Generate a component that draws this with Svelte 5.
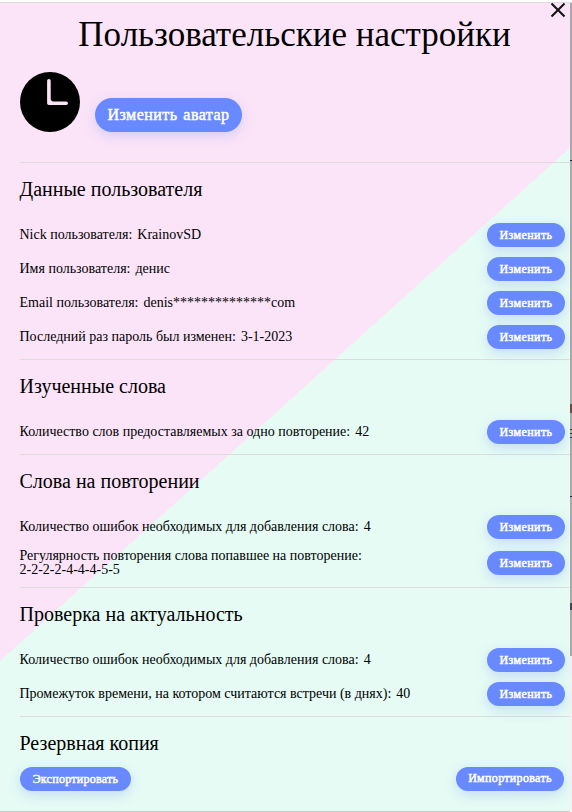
<script>
  const sections = [
    {
      title: 'Данные пользователя',
      rows: [
        { label: 'Nick пользователя:', value: 'KrainovSD' },
        { label: 'Имя пользователя:', value: 'денис' },
        { label: 'Email пользователя:', value: 'denis**************com' },
        { label: 'Последний раз пароль был изменен:', value: '3-1-2023' },
      ],
    },
    {
      title: 'Изученные слова',
      rows: [{ label: 'Количество слов предоставляемых за одно повторение:', value: '42' }],
    },
    {
      title: 'Слова на повторении',
      rows: [
        { label: 'Количество ошибок необходимых для добавления слова:', value: '4' },
        { label: 'Регулярность повторения слова попавшее на повторение:', value: '2-2-2-2-4-4-4-5-5', wrap: true },
      ],
    },
    {
      title: 'Проверка на актуальность',
      rows: [
        { label: 'Количество ошибок необходимых для добавления слова:', value: '4' },
        { label: 'Промежуток времени, на котором считаются встречи (в днях):', value: '40' },
      ],
    },
  ];
</script>

<div class="page">
  <main class="panel">
    <button class="close" aria-label="Закрыть">
      <svg width="16" height="16" viewBox="0 0 16 16"><path d="M1.5 1.5 14.5 14.5M14.5 1.5 1.5 14.5" /></svg>
    </button>
    <h1>Пользовательские настройки</h1>
    <div class="profile">
      <svg class="avatar" width="60" height="60" viewBox="0 0 60 60">
        <circle cx="30" cy="30" r="30" />
        <path d="M28.9 8.7V31.2H46.2" />
        <path class="joint" d="M30 28.5 31.8 30.5" />
      </svg>
      <button class="btn large">Изменить аватар</button>
    </div>
    {#each sections as section}
      <section>
        <h2>{section.title}</h2>
        <div class="rows">
          {#each section.rows as row}
            <div class="row">
              <p class:wrap={row.wrap}><span>{row.label}</span><span>{row.value}</span></p>
              <button class="btn">Изменить</button>
            </div>
          {/each}
        </div>
      </section>
    {/each}
    <section class="backup">
      <h2>Резервная копия</h2>
      <div class="row">
        <button class="btn export">Экспортировать</button>
        <button class="btn import">Импортировать</button>
      </div>
    </section>
  </main>
  <div class="edge"></div>
</div>

<style>
  :global(body) {
    background: #fff;
  }
  .page {
    box-sizing: border-box;
    display: flex;
    height: 812px;
    padding-top: 2px;
    overflow: hidden;
    font-family: 'Liberation Serif', 'Times New Roman', serif;
    color: #000;
  }
  .panel {
    box-sizing: border-box;
    position: relative;
    width: 570px;
    height: 810px;
    padding-left: 20px;
    border-top: 1px solid #dcdcdf;
    border-bottom: 1px solid #c8cccb;
    background: linear-gradient(138deg, #fbe4f8 49.8%, #e5fbf4 49.8%);
  }
  .edge {
    box-sizing: border-box;
    width: 2px;
    height: 810px;
    border-top: 1px solid #dcdcdf;
    background: linear-gradient(
      #a9a9a9 157px, #222b40 157px 158px, #a9a9a9 158px 401px,
      #70483c 401px 410px, #a9a9a9 410px 426px,
      #333 426px 427px, #a9a9a9 427px 430px, #333 430px 431px,
      #a9a9a9 431px 434px, #333 434px 435px, #a9a9a9 435px 493px,
      #222b40 493px 494px, #a9a9a9 494px 600px,
      #43454f 600px 607px, #a9a9a9 607px 653px, #f3f1f3 653px
    );
  }
  .close {
    position: absolute;
    top: -1px;
    right: 4px;
    width: 16px;
    height: 16px;
    padding: 0;
    border: 0;
    background: none;
  }
  .close svg {
    display: block;
    fill: none;
    stroke: #111;
    stroke-width: 2;
  }
  h1, h2, p {
    margin: 0;
    font-weight: 400;
  }
  h1 {
    box-sizing: border-box;
    height: 69px;
    padding: 12px 1px 0 0;
    font-size: 35px;
    line-height: 40px;
    text-align: center;
    white-space: nowrap;
  }
  .profile {
    display: flex;
    align-items: flex-end;
    gap: 15px;
    height: 60px;
    margin-bottom: 30px;
  }
  .avatar path {
    fill: none;
    stroke: #fbe4f8;
    stroke-width: 3.6;
    stroke-linecap: round;
    stroke-linejoin: round;
  }
  .avatar .joint {
    stroke-width: 2;
  }
  section {
    border-top: 1px solid #dcdcdf;
    padding-bottom: 10px;
  }
  h2 {
    box-sizing: border-box;
    height: 60px;
    padding-top: 14px;
    margin-left: -0.5px;
    font-size: 20px;
    line-height: 24px;
  }
  .rows {
    display: flex;
    flex-direction: column;
    gap: 10px;
  }
  .row {
    display: flex;
    justify-content: space-between;
    align-items: center;
    padding-right: 5px;
  }
  p {
    display: flex;
    gap: 5px;
    margin-left: -0.5px;
    font-size: 14px;
    line-height: 14px;
    white-space: nowrap;
  }
  p.wrap {
    flex-direction: column;
    gap: 0;
  }
  .btn {
    box-sizing: border-box;
    width: 78px;
    height: 24px;
    padding: 0;
    border: 0;
    border-radius: 17px;
    background: #6889ff;
    box-shadow: 0 4px 12px rgba(104, 137, 255, 0.25);
    color: #fff;
    font: 400 12px/24px 'Liberation Serif', 'Times New Roman', serif;
    letter-spacing: 0.4px;
    -webkit-text-stroke: 0.5px #fff;
    white-space: nowrap;
  }
  .large {
    width: 147px;
    height: 34px;
    font-size: 16px;
    line-height: 34px;
    letter-spacing: 0.45px;
    word-spacing: 1.5px;
  }
  .backup h2 {
    height: 50px;
  }
  .backup .row {
    padding-right: 6px;
  }
  .export {
    width: 111px;
    letter-spacing: 0.27px;
  }
  .import {
    width: 108px;
    padding-bottom: 2px;
    line-height: 22px;
    letter-spacing: 0.33px;
  }
</style>
